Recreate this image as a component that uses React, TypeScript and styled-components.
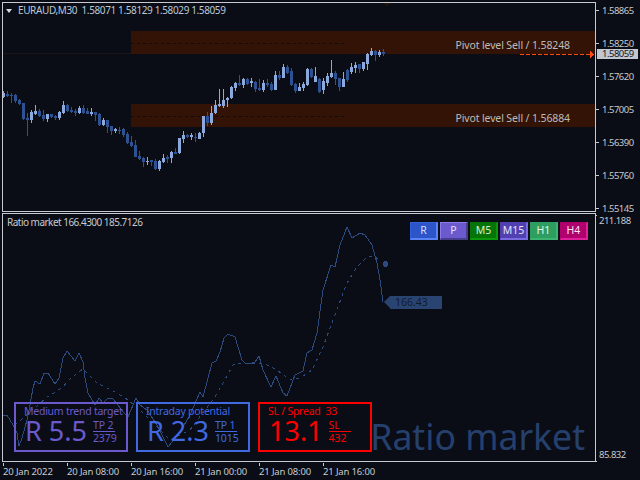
import React from 'react';
import styled, { createGlobalStyle } from 'styled-components';

const UI_FONT = '"Noto Sans", "Liberation Sans", sans-serif';
const FRAME = '#c6cad0';
const BG = '#0a0d16';
const LINE = '#2c4a7e';

const GlobalStyle = createGlobalStyle`
  html, body {
    margin: 0;
    background: ${BG};
    overflow: hidden;
  }
`;

// [wick top, body top, body bottom, wick bottom, light candle]
type Candle = [number, number, number, number, number];

const candles: Candle[] = [
  [91, 93, 97, 98, 1], [91, 94, 96, 97, 0], [93, 95, 96, 103, 0], [94, 95, 101, 103, 0], [99, 100, 104, 105, 0],
  [103, 103, 119, 120, 0], [113, 118, 120, 136, 0], [110, 112, 120, 123, 1], [105, 111, 114, 115, 1], [109, 111, 116, 117, 0],
  [110, 115, 119, 121, 0], [114, 114, 119, 122, 1], [114, 114, 117, 118, 0], [115, 116, 118, 120, 0], [111, 112, 118, 120, 1],
  [101, 105, 113, 114, 1], [104, 105, 111, 112, 0], [107, 110, 112, 113, 0], [109, 111, 113, 116, 0], [106, 108, 113, 114, 1],
  [105, 108, 113, 114, 0], [108, 111, 114, 114, 0], [108, 112, 114, 116, 1], [112, 112, 115, 121, 0], [113, 114, 125, 126, 0],
  [118, 120, 125, 126, 1], [120, 120, 127, 133, 0], [126, 126, 131, 135, 0], [128, 129, 131, 133, 1], [127, 130, 131, 134, 0],
  [128, 129, 135, 137, 0], [132, 134, 143, 144, 0], [136, 142, 146, 147, 0], [140, 145, 157, 157, 0], [151, 156, 159, 160, 0],
  [157, 158, 162, 167, 0], [157, 161, 162, 165, 1], [160, 160, 162, 166, 0], [159, 161, 169, 170, 0], [160, 161, 169, 171, 1],
  [154, 158, 162, 163, 1], [155, 157, 159, 163, 0], [151, 152, 158, 163, 1], [148, 152, 154, 154, 0], [138, 138, 153, 154, 1],
  [131, 135, 139, 143, 1], [134, 135, 137, 138, 0], [133, 135, 137, 140, 1], [133, 137, 138, 142, 0], [132, 133, 139, 139, 1],
  [116, 116, 133, 137, 1], [112, 116, 123, 126, 0], [106, 113, 123, 125, 1], [100, 105, 113, 114, 1], [89, 104, 106, 107, 1],
  [89, 100, 106, 108, 1], [97, 98, 100, 107, 1], [86, 87, 98, 99, 1], [82, 83, 88, 91, 1], [75, 83, 85, 86, 0],
  [78, 79, 85, 88, 1], [78, 79, 84, 85, 0], [78, 81, 83, 87, 1], [81, 82, 89, 92, 0], [79, 88, 90, 91, 0],
  [80, 83, 90, 92, 1], [79, 83, 85, 87, 0], [82, 84, 90, 91, 0], [71, 75, 90, 90, 1], [71, 75, 78, 80, 0],
  [64, 67, 78, 78, 1], [65, 67, 73, 74, 0], [68, 71, 85, 86, 0], [83, 84, 91, 93, 0], [83, 87, 91, 91, 1],
  [82, 84, 88, 91, 1], [68, 69, 85, 86, 1], [68, 69, 77, 78, 0], [67, 76, 82, 82, 1], [78, 79, 92, 93, 0],
  [78, 81, 90, 94, 1], [73, 76, 83, 86, 1], [60, 73, 77, 78, 1], [71, 73, 79, 85, 0], [78, 78, 87, 91, 0],
  [72, 79, 87, 87, 1], [69, 70, 80, 82, 0], [63, 67, 72, 74, 1], [62, 65, 68, 73, 1], [64, 64, 69, 73, 0],
  [62, 62, 69, 71, 1], [53, 54, 64, 70, 1], [48, 51, 55, 56, 1], [50, 51, 55, 61, 0], [50, 52, 55, 57, 1],
  [49, 52, 54, 56, 0],
];

const ratioLine = [
  [3, 416], [7, 415], [10, 420], [13, 425], [17, 433], [19, 446], [22, 438], [27, 420], [30, 405], [33, 388], [35, 381],
  [40, 384], [44, 373], [48, 373], [55, 384], [59, 378], [63, 358], [67, 351], [75, 361], [79, 353], [83, 362], [85, 378],
  [88, 393], [95, 405], [99, 398], [103, 403], [108, 398], [113, 399], [118, 405], [123, 412], [128, 417], [136, 398],
  [140, 405], [147, 410], [157, 425], [168, 447], [180, 432], [190, 415], [200, 392], [203, 397], [212, 363], [216, 361],
  [220, 352], [224, 338], [228, 334], [235, 337], [242, 360], [245, 363], [252, 363], [255, 362], [259, 356], [263, 370],
  [271, 387], [276, 376], [283, 393], [287, 396], [295, 375], [303, 371], [307, 353], [312, 350], [317, 333], [323, 290],
  [331, 265], [335, 267], [340, 245], [347, 227], [352, 238], [360, 233], [365, 235], [372, 245], [377, 263], [380, 280],
  [383, 302],
];

const ratioAverage = [
  [15, 425], [30, 412], [47, 397], [62, 388], [72, 377], [83, 369], [97, 383], [107, 388], [117, 393], [128, 400],
  [140, 410], [155, 425], [170, 440], [190, 430], [205, 410], [213, 400], [223, 383], [233, 365], [238, 363], [250, 363],
  [263, 363], [277, 370], [290, 380], [300, 378], [312, 370], [323, 347], [333, 320], [347, 283], [357, 267], [367, 257],
  [373, 256], [380, 260],
];

const priceTicks = ['1.58865', '1.58250', '1.57620', '1.57005', '1.56390', '1.55760', '1.55145'];
const timeLabels = ['20 Jan 2022', '20 Jan 08:00', '20 Jan 16:00', '21 Jan 00:00', '21 Jan 08:00', '21 Jan 16:00'];

const buttons = [
  { label: 'R', face: '#2b55c9', hi: '#3560dc', lo: '#5b82f5', ink: '#d5defc' },
  { label: 'P', face: '#6a5acd', hi: '#8b7bec', lo: '#483d8b', ink: '#e6e2fa' },
  { label: 'M5', face: '#067406', hi: '#067406', lo: '#0c980c', ink: '#dcefc8' },
  { label: 'M15', face: '#5040b0', hi: '#5040b0', lo: '#7b6be0', ink: '#e6e2fa' },
  { label: 'H1', face: '#2e9e60', hi: '#2e9e60', lo: '#3cb371', ink: '#e2f5ea' },
  { label: 'H4', face: '#b0006e', hi: '#b0006e', lo: '#e0209a', ink: '#fbe2f1' },
];

const toPoints = (pts: number[][]) => pts.map((p) => p.join(',')).join(' ');

export default function App() {
  return (
    <>
      <GlobalStyle />
      <Screen>
        <Pane>
          <Plot $height={210}>
            <Band $top={28}>Pivot level Sell / 1.58248</Band>
            <Band $top={101}>Pivot level Sell / 1.56884</Band>
            <ChartSvg viewBox="3 3 592 208">
              <rect x={3} y={53} width={128} height={1} fill="#1c1416" />
              <polygon points="383,3 391,3 387,6" fill="#1e1509" />
              <line x1={131} y1={43.5} x2={345} y2={43.5} stroke="#0c0c10" strokeDasharray="3 3" />
              <line x1={131} y1={116.5} x2={345} y2={116.5} stroke="#0c0c10" strokeDasharray="3 3" />
              {candles.map(([hi, top, bottom, lo, light], i) => (
                <g key={i} fill={light ? '#8ca9dd' : '#2d5293'}>
                  <rect x={3 + 4 * i} y={hi} width={1} height={lo - hi} />
                  <rect x={2 + 4 * i} y={top} width={3} height={Math.max(bottom - top, 1)} />
                </g>
              ))}
              <line x1={520} y1={54.5} x2={590} y2={54.5} stroke="#ff4a10" strokeDasharray="4 2" />
              <polygon points="590,51 594,54.5 590,58" fill="#ff4a10" />
            </ChartSvg>
            <Title>
              <Caret />
              <span>EURAUD,M30&nbsp;&nbsp;1.58071 1.58129 1.58029 1.58059</span>
            </Title>
          </Plot>
          <PriceAxis>
            {priceTicks.map((tick) => (
              <PriceTick key={tick}>{tick}</PriceTick>
            ))}
            <LastPrice>1.58059</LastPrice>
          </PriceAxis>
        </Pane>

        <Pane>
          <Plot $height={249}>
            <ChartSvg viewBox="3 214 592 247">
              <polyline points={toPoints(ratioLine)} fill="none" stroke={LINE} />
              <polyline points={toPoints(ratioAverage)} fill="none" stroke={LINE} strokeDasharray="3 4" />
              <circle cx={385.5} cy={264} r={3} fill={LINE} />
            </ChartSvg>
            <SubTitle>Ratio market 166.4300 185.7126</SubTitle>
            <ButtonRow>
              {buttons.map((b) => (
                <PeriodButton key={b.label} $face={b.face} $hi={b.hi} $lo={b.lo} $ink={b.ink}>
                  {b.label}
                </PeriodButton>
              ))}
            </ButtonRow>
            <ValueTag>166.43</ValueTag>
            <Watermark>Ratio market</Watermark>
            <Cards>
              <Card $color="#6a5acd">
                <CardLabel>Medium trend target</CardLabel>
                <CardBody>
                  <BigValue>R 5.5</BigValue>
                  <Fraction>
                    <FractionTop>TP 2</FractionTop>
                    <span>2379</span>
                  </Fraction>
                </CardBody>
              </Card>
              <Card $color="#4169e1">
                <CardLabel>Intraday potential</CardLabel>
                <CardBody>
                  <BigValue>R 2.3</BigValue>
                  <Fraction>
                    <FractionTop>TP 1</FractionTop>
                    <span>1015</span>
                  </Fraction>
                </CardBody>
              </Card>
              <Card $color="#ff0000">
                <CardLabel>SL / Spread&nbsp; 33</CardLabel>
                <CardBody>
                  <BigValue>13.1</BigValue>
                  <Fraction>
                    <FractionTop>SL</FractionTop>
                    <span>432</span>
                  </Fraction>
                </CardBody>
              </Card>
            </Cards>
          </Plot>
          <RatioAxis>
            <span>211.188</span>
            <span>85.832</span>
          </RatioAxis>
        </Pane>

        <TimeAxis>
          {timeLabels.map((label) => (
            <TimeCell key={label}>{label}</TimeCell>
          ))}
        </TimeAxis>
      </Screen>
    </>
  );
}

const Screen = styled.div`
  width: 640px;
  height: 480px;
  box-sizing: border-box;
  padding: 2px 0 0 2px;
  display: flex;
  flex-direction: column;
  gap: 1px;
  background: ${BG};
  font-family: ${UI_FONT};
  font-size: 9.5px;
  line-height: 11px;
  color: #c6cad0;
  overflow: hidden;
`;

const Pane = styled.div`
  display: flex;
`;

const Plot = styled.div<{ $height: number }>`
  position: relative;
  width: 594px;
  height: ${(p) => p.$height}px;
  box-sizing: border-box;
  border: 1px solid ${FRAME};
  flex: none;
`;

const ChartSvg = styled.svg`
  position: absolute;
  inset: 0;
  width: 592px;
  height: 100%;
  shape-rendering: crispEdges;
`;

const Band = styled.div<{ $top: number }>`
  position: absolute;
  top: ${(p) => p.$top}px;
  left: 128px;
  right: 0;
  height: 22.5px;
  box-sizing: border-box;
  display: flex;
  align-items: center;
  justify-content: flex-end;
  padding: 6px 25px 0 0;
  background: #331305;
  color: #bdbcb8;
  font-size: 10.5px;
  letter-spacing: -0.12px;
`;

const Title = styled.div`
  position: absolute;
  top: 2px;
  left: 3px;
  display: flex;
  align-items: center;
  gap: 5px;
  color: #bcc8d8;
  font-size: 10px;
  letter-spacing: -0.38px;
  white-space: nowrap;
`;

const Caret = styled.i`
  width: 0;
  height: 0;
  margin-right: 1px;
  border-left: 3.5px solid transparent;
  border-right: 3.5px solid transparent;
  border-top: 4px solid #d8dade;
`;

const PriceAxis = styled.div`
  position: relative;
  flex: 1;
  display: flex;
  flex-direction: column;
  justify-content: space-between;
  padding: 3px 0 0 6px;
  margin-bottom: -2px;
  letter-spacing: -0.5px;
`;

const PriceTick = styled.span`
  position: relative;

  &::before {
    content: '';
    position: absolute;
    left: -6px;
    top: 5px;
    width: 3px;
    height: 1px;
    background: ${FRAME};
  }
`;

const LastPrice = styled.div`
  position: absolute;
  top: 47px;
  left: 1px;
  width: 36px;
  height: 10px;
  padding-left: 5px;
  line-height: 10px;
  background: #c2c6ce;
  color: #11141c;
`;

const RatioAxis = styled.div`
  position: relative;
  flex: 1;
  display: flex;
  flex-direction: column;
  justify-content: space-between;
  padding: 2px 0 2px 3px;
  letter-spacing: -0.5px;

  &::before,
  &::after {
    content: '';
    position: absolute;
    left: 0;
    width: 1px;
    height: 1px;
    background: ${FRAME};
  }

  &::before {
    top: 2px;
  }

  &::after {
    bottom: 0;
  }
`;

const SubTitle = styled.div`
  position: absolute;
  top: 3px;
  left: 4px;
  font-size: 10px;
  letter-spacing: -0.52px;
  color: #c6cad0;
  white-space: nowrap;
`;

const ButtonRow = styled.div`
  position: absolute;
  top: 8px;
  left: 407px;
  display: flex;
  gap: 2px;
`;

const PeriodButton = styled.div<{ $face: string; $hi: string; $lo: string; $ink: string }>`
  width: 28px;
  height: 18px;
  box-sizing: border-box;
  display: flex;
  align-items: center;
  justify-content: center;
  background: ${(p) => p.$face};
  border-style: solid;
  border-width: 1px 2px 2px 1px;
  border-color: ${(p) => p.$hi} ${(p) => p.$lo} ${(p) => p.$lo} ${(p) => p.$hi};
  color: ${(p) => p.$ink};
  font-size: 10.5px;
`;

const ValueTag = styled.div`
  position: absolute;
  top: 82px;
  left: 387px;
  width: 47px;
  height: 13px;
  padding-left: 5px;
  line-height: 13px;
  background: #2a4472;
  color: #101b30;
  font-size: 10.5px;

  &::before {
    content: '';
    position: absolute;
    left: -6px;
    top: 0;
    border-top: 6.5px solid transparent;
    border-bottom: 6.5px solid transparent;
    border-right: 6px solid #2a4472;
  }
`;

const Watermark = styled.div`
  position: absolute;
  right: 10px;
  bottom: 3px;
  font-size: 35.6px;
  line-height: 44px;
  color: #26406e;
  white-space: nowrap;
`;

const Cards = styled.div`
  position: absolute;
  left: 11px;
  bottom: 9px;
  display: flex;
  gap: 8px;
`;

const Card = styled.div<{ $color: string }>`
  width: 114px;
  height: 50px;
  box-sizing: border-box;
  border: 2px solid ${(p) => p.$color};
  padding: 1px 0 0 9px;
  color: ${(p) => p.$color};
`;

const CardLabel = styled.div`
  margin-left: -1px;
  font-size: 10.5px;
  line-height: 12px;
  letter-spacing: -0.25px;
  white-space: nowrap;
`;

const CardBody = styled.div`
  display: flex;
  align-items: center;
  gap: 6px;
`;

const BigValue = styled.div`
  font-size: 27px;
  line-height: 26px;
  white-space: nowrap;
`;

const Fraction = styled.div`
  display: flex;
  flex-direction: column;
  margin-top: 2px;
  font-size: 10.5px;
  line-height: 12px;
  letter-spacing: -0.1px;
`;

const FractionTop = styled.span`
  width: 22px;
  border-bottom: 1px solid currentColor;
  white-space: nowrap;
`;

const TimeAxis = styled.div`
  display: flex;
  padding-left: 1px;
  letter-spacing: -0.15px;
`;

const TimeCell = styled.div`
  position: relative;
  width: 64px;
  padding: 3px 0 0 0;
  white-space: nowrap;

  &::before {
    content: '';
    position: absolute;
    left: 0;
    top: 0;
    width: 1px;
    height: 3px;
    background: ${FRAME};
  }
`;
